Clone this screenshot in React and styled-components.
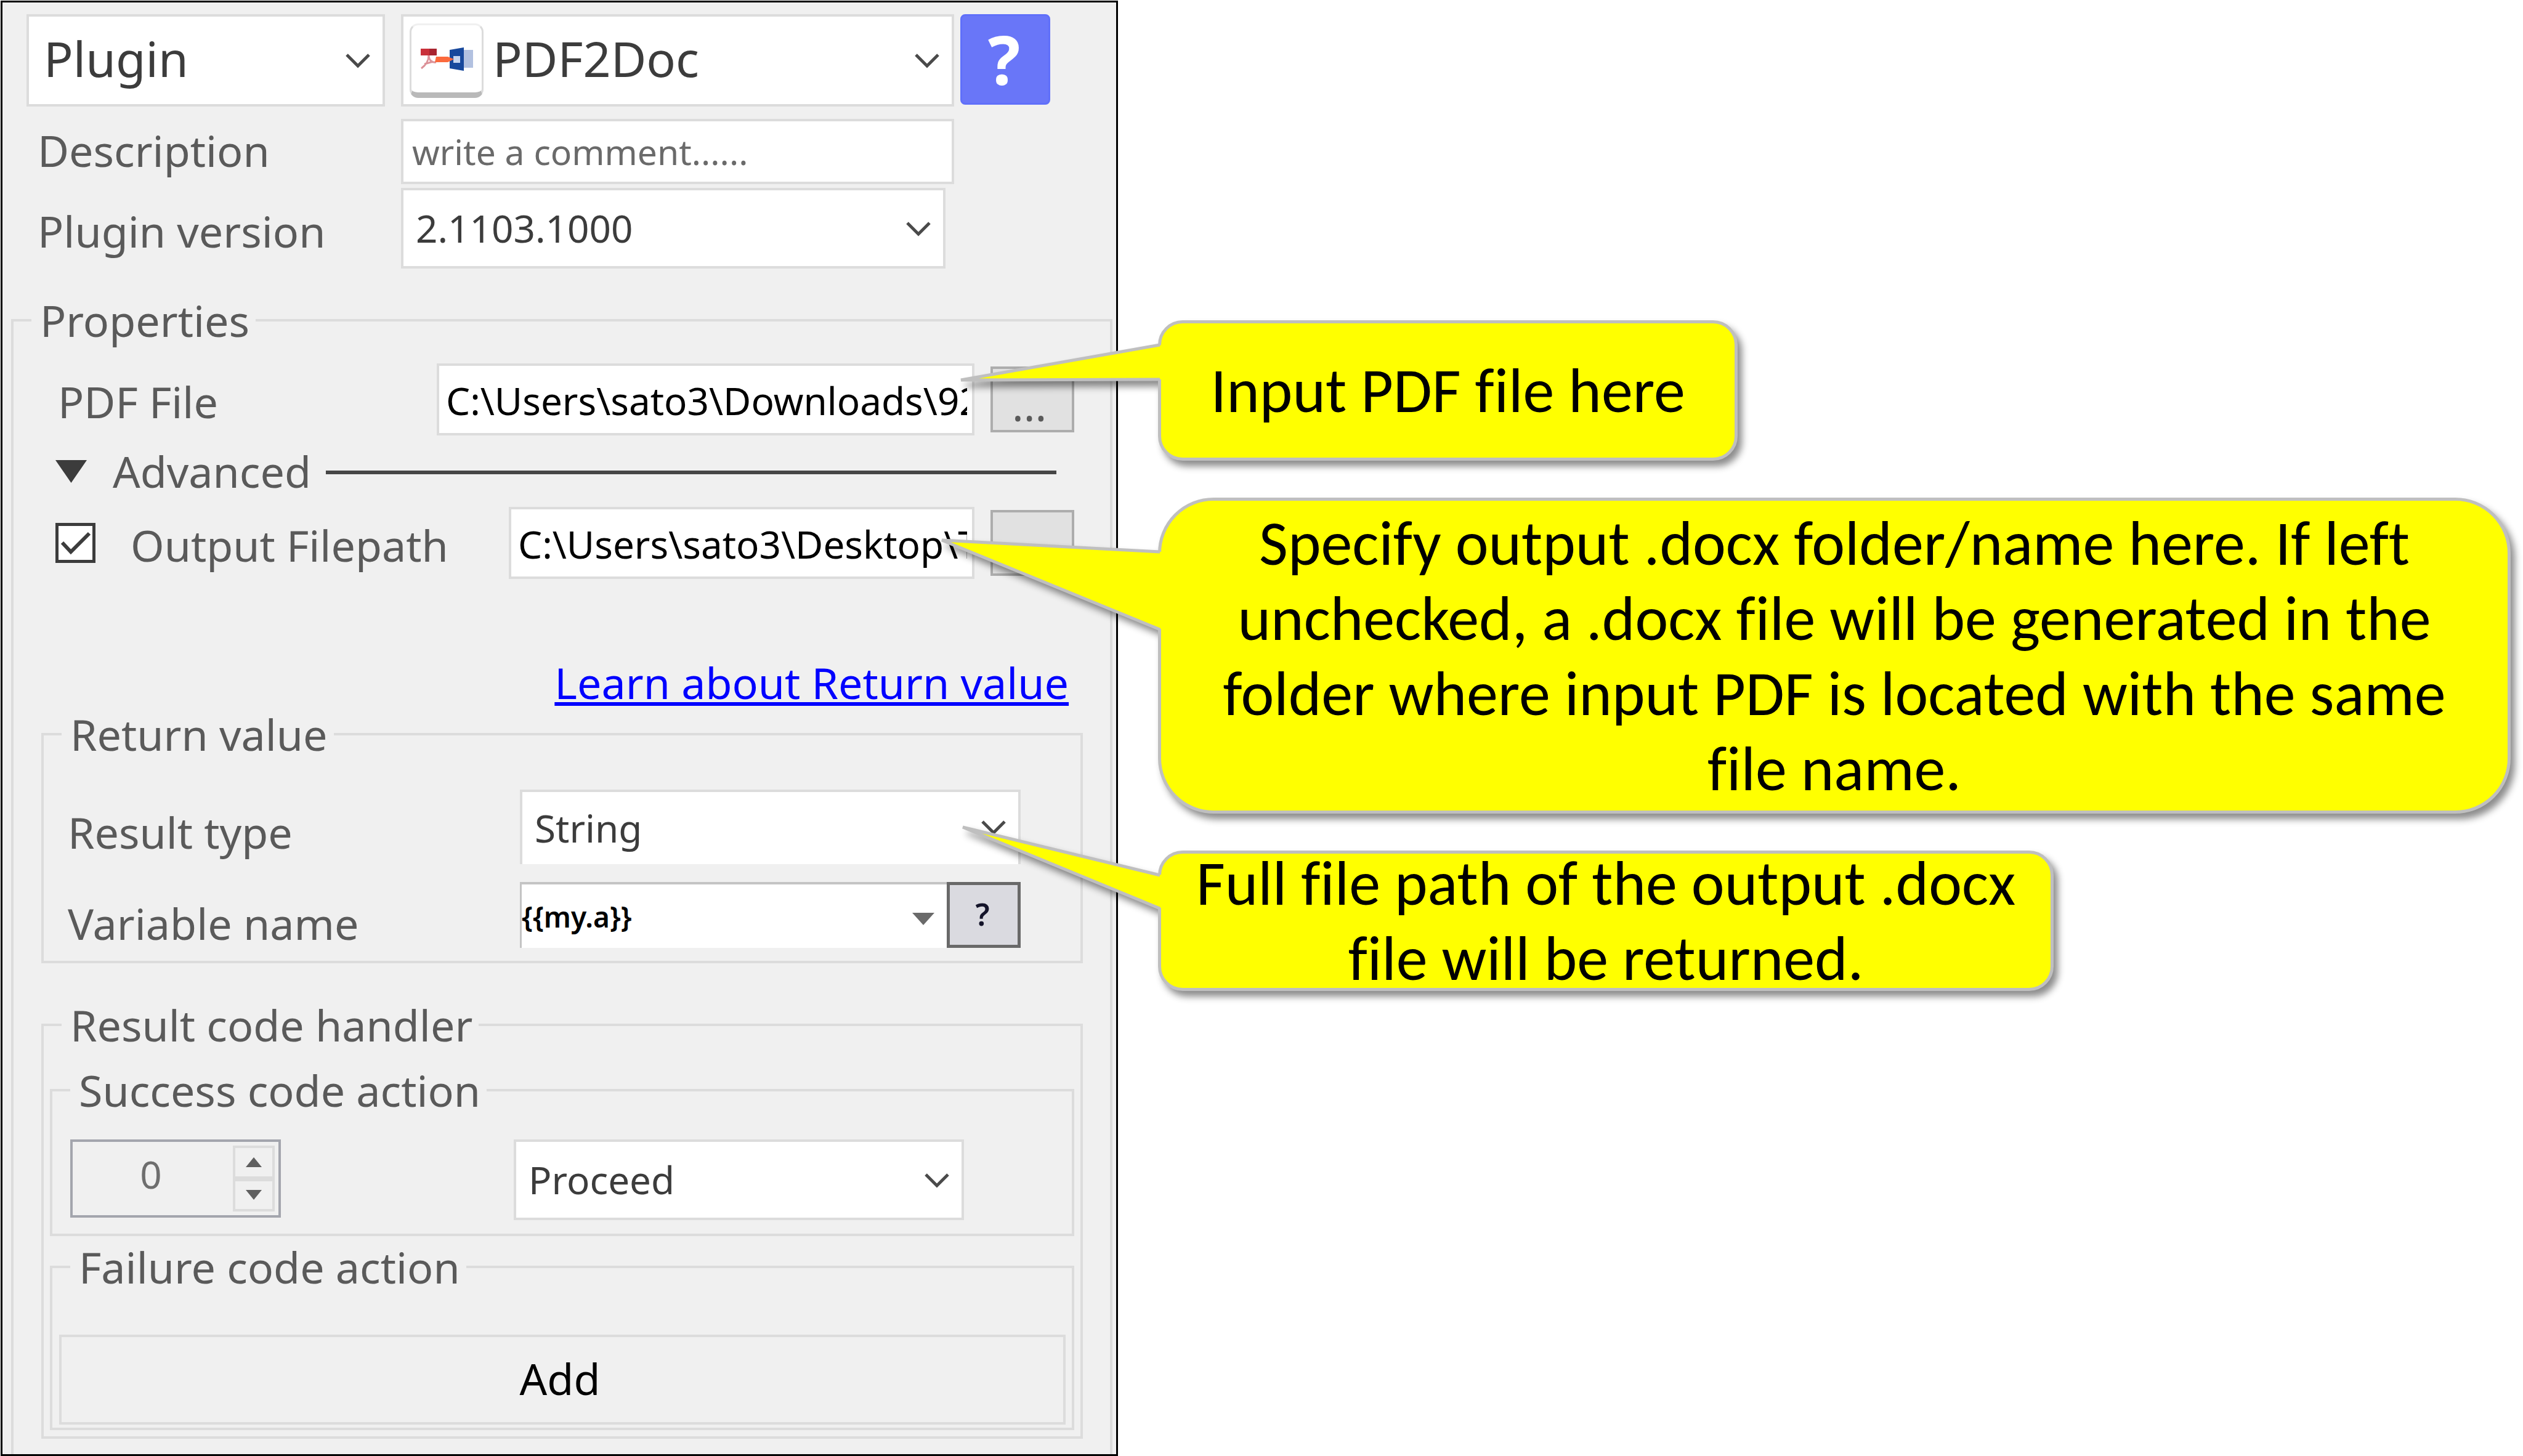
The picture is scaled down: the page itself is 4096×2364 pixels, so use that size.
import React from 'react';
import styled, { createGlobalStyle, css } from 'styled-components';

const ui = '"Noto Sans", "Open Sans", sans-serif';
const line = '#dcdcdc';

const GlobalStyle = createGlobalStyle`
  *, *::before, *::after { box-sizing: border-box; }
  body { margin: 0; background: #ffffff; font-family: ${ui}; }
  button, input, select { font-family: inherit; margin: 0; }
`;

const Page = styled.main`
  display: grid;
  grid-template-columns: 443fr 557fr;
  align-items: start;
  padding: 1px 0 1px 1px;
`;

const Panel = styled.form`
  border: 3px solid #000000;
  background: #f0f0f0;
  min-width: 0;
`;

const Header = styled.div`
  display: grid;
  grid-template-columns: 608px minmax(0, 1fr) 156px;
  padding: 19px 107px 0 39px;
`;

const Label = styled.label`
  padding: ${(p) => p.$drop || 0}px 0 ${(p) => p.$lift || 0}px ${(p) => p.$indent || 0}px;
  align-self: center;
  font-size: 70px;
  line-height: 80px;
  color: #5a5a5a;
  white-space: nowrap;
`;

const SelectBox = styled.div`
  position: relative;
  display: flex;
  height: ${(p) => p.$height || 131}px;
  margin: ${(p) => p.$margin || '0'};
`;

const Select = styled.select`
  appearance: none;
  flex: 1;
  min-width: 0;
  border: 4px solid ${line};
  border-bottom-width: ${(p) => (p.$open ? 0 : 4)}px;
  border-radius: 0;
  background: #ffffff;
  color: #3c3c3c;
  padding: 0 80px 2px 20px;
  font-size: 62px;
  ${(p) => p.$large && css`
    font-size: 79px;
    padding: 0 80px 8px ${p.$icon ? 145 : 24}px;
  `}
`;

const ChevronMark = styled.svg`
  position: absolute;
  right: 23px;
  top: 50%;
  width: 42px;
  height: 28px;
  margin-top: -13px;
  pointer-events: none;
`;

const Chevron = () => (
  <ChevronMark viewBox="0 0 42 28" aria-hidden="true">
    <path d="M3 4 L21 22 L39 4" fill="none" stroke="#4a4a4a" strokeWidth="5" />
  </ChevronMark>
);

const PluginTile = styled.span`
  position: absolute;
  left: 14px;
  top: 15px;
  width: 120px;
  height: 121px;
  border-radius: 14px;
  background: #ffffff;
  border: 3px solid #dcdcdc;
  border-top-color: #f0f0f0;
  border-bottom: 9px solid #b9b9b9;
  display: flex;
  align-items: center;
  justify-content: center;
  pointer-events: none;
`;

const PluginIcon = () => (
  <svg width="88" height="44" viewBox="0 0 88 44" aria-hidden="true">
    <rect x="2" y="5" width="26" height="11" fill="#c9303a" />
    <rect x="16" y="5" width="12" height="11" fill="#a82430" />
    <path d="M15 16 C15 24 10 32 3 37 M15 17 C16 24 20 28 27 27 M8 30 L22 26" fill="none" stroke="#dc9299" strokeWidth="3" />
    <rect x="72" y="7" width="15" height="29" fill="#b2c1e0" />
    <path d="M49 7 L72 3 V41 L49 37 Z" fill="#17489c" />
    <rect x="55" y="17" width="11" height="11" fill="#c5d5f0" />
    <path d="M27 18 H46 L56 22 L46 27 H25 Z" fill="#fb6a3d" />
  </svg>
);

const HelpButton = styled.button`
  justify-self: end;
  width: 146px;
  height: 147px;
  border: 3px solid #6070fa;
  border-radius: 8px;
  background: #6976f8;
  color: #ffffff;
  padding: 0 4px 4px 0;
  font-size: 110px;
  font-weight: 700;
  line-height: 130px;
`;

const TextInput = styled.input`
  min-width: 0;
  width: 100%;
  height: 117px;
  border: 4px solid ${line};
  border-radius: 0;
  background: #ffffff;
  color: #000000;
  font-size: 62px;
  padding: 2px 8px 0 11px;
`;

const CommentInput = styled(TextInput)`
  height: 106px;
  font-size: 57px;
  padding: 0 14px;
  &::placeholder { color: #6a6a6a; opacity: 1; }
`;

const Group = styled.fieldset`
  min-width: 0;
  margin: ${(p) => p.$margin || '0'};
  padding: ${(p) => p.$padding || '0'};
  border: 4px solid ${line};
  border-bottom-width: ${(p) => (p.$open ? 0 : 4)}px;
`;

const Legend = styled.legend`
  margin-left: ${(p) => p.$shift}px;
  padding: 0 10px 0 14px;
  font-size: 70px;
  line-height: 80px;
  color: #5a5a5a;
`;

const Fields = styled.div`
  padding: 30px 58px 0 68px;
`;

const FieldRow = styled.div`
  display: grid;
  grid-template-columns: ${(p) => p.$columns};
  align-items: center;
  margin-top: ${(p) => p.$gap || 0}px;
`;

const BrowseButton = styled.button`
  justify-self: end;
  width: 136px;
  height: 107px;
  border: 4px solid #adadad;
  border-radius: 0;
  background: #e1e1e1;
  color: #5a5a5a;
  font-size: 70px;
  line-height: 80px;
  padding: 16px 10px 0 0;
`;

const AdvancedRow = styled.button`
  display: flex;
  align-items: center;
  width: 100%;
  height: 116px;
  border: 0;
  padding: 0 29px 0 0;
  background: none;
  color: #5a5a5a;
  font-size: 70px;
  line-height: 80px;
  text-align: left;

  svg { width: 51px; height: 37px; margin-right: 42px; }
  &::after { content: ''; flex: 1; height: 6px; margin: 4px 0 0 24px; background: #464646; }
`;

const CheckBox = styled.input`
  appearance: none;
  display: block;
  width: 65px;
  height: 65px;
  margin: 0;
  border: 5px solid #3c3c3c;
  background: #ffffff;
`;

const CheckCell = styled.span`
  position: relative;
  display: block;
  width: 65px;
  svg { position: absolute; inset: 0; pointer-events: none; }
`;

const LinkLine = styled.div`
  display: flex;
  justify-content: flex-end;
  padding: 128px 67px 0 0;
`;

const Link = styled.a`
  color: #0000ff;
  font-size: 70px;
  line-height: 80px;
  text-decoration: underline;
  text-decoration-thickness: 6px;
  text-underline-offset: 5px;
  text-decoration-skip-ink: none;
`;

const Groups = styled.div`
  padding: 4px 44px 25px 45px;
`;

const Combo = styled.div`
  position: relative;
  display: flex;
  height: 107px;

  svg { position: absolute; right: 140px; top: 50px; width: 36px; height: 20px; }
`;

const ComboInput = styled.input`
  flex: 1;
  min-width: 0;
  border: 0;
  border-top: 4px solid #c4c4c4;
  border-left: 3px solid #c4c4c4;
  border-radius: 0;
  padding: 0 60px 0 0;
  font-size: 46px;
  font-weight: 600;
  color: #000000;
  background: #ffffff;
`;

const SmallHelp = styled.button`
  width: 120px;
  border: 5px solid #696969;
  border-radius: 0;
  background: #dadae0;
  color: #14142a;
  font-size: 50px;
  font-weight: 600;
  padding: 0 4px 4px 0;
`;

const ActionRow = styled.div`
  display: grid;
  grid-template-columns: 720px minmax(0, 1fr);
  align-items: start;
`;

const Spinner = styled.div`
  display: flex;
  width: 342px;
  height: 127px;
  border: 4px solid #a3a5ad;
  padding: 6px;
`;

const SpinnerValue = styled.input`
  flex: 1;
  min-width: 0;
  border: 0;
  padding: 0 12px 16px 0;
  background: none;
  color: #6e6e6e;
  font-size: 62px;
  text-align: center;
`;

const SpinnerButtons = styled.div`
  display: grid;
  grid-template-rows: 1fr 1fr;
  width: 68px;
`;

const StepButton = styled.button`
  display: flex;
  align-items: center;
  justify-content: center;
  border: 4px solid ${line};
  border-radius: 0;
  padding: 0;
  background: #f0f0f0;
  svg { width: 26px; height: 16px; }
`;

const AddButton = styled.button`
  display: block;
  width: 100%;
  height: 146px;
  border: 4px solid ${line};
  border-radius: 0;
  background: #f0f0f0;
  color: #000000;
  font-size: 70px;
  padding: 0 8px 4px 0;
`;

const Notes = styled.aside`
  display: flex;
  flex-direction: column;
  align-items: flex-start;
  gap: 60px;
  padding: 519px 20px 0 65px;
`;

const Callout = styled.section`
  position: relative;
  display: flex;
  align-items: center;
  justify-content: center;
  width: ${(p) => p.$width};
  height: ${(p) => p.$height}px;
  border: 5px solid #bfbfbf;
  border-radius: ${(p) => p.$radius}px;
  background: #ffff00;
  filter: drop-shadow(7px 9px 6px rgba(0, 0, 0, 0.45));
`;

const CalloutText = styled.p`
  margin: 0;
  font-family: Carlito, Lato, sans-serif;
  font-size: 102px;
  line-height: 122px;
  font-variant-ligatures: none;
  text-align: center;
  color: #000000;
  white-space: pre;
`;

const Tail = styled.svg`
  position: absolute;
  overflow: visible;
  right: 100%;
  top: ${(p) => p.$top}px;
  width: ${(p) => p.$w}px;
  height: ${(p) => p.$h}px;
`;

function Pointer({ top, tip, base }) {
  const [tx, ty] = tip;
  return (
    <Tail $top={top} $w={tx} $h={base} viewBox={`0 0 ${tx} ${base}`} aria-hidden="true">
      <path d={`M${tx + 2} 0 L0 ${ty} L${tx + 2} ${base} Z`} fill="#ffff00" />
      <path
        d={`M${tx - 2} 0 L0 ${ty} L${tx - 2} ${base}`}
        fill="none"
        stroke="#bfbfbf"
        strokeWidth="5"
        strokeLinejoin="bevel"
      />
      <path d={`M${tx - 5} 4 H${tx + 2} V${base - 4} H${tx - 5} Z`} fill="#ffff00" />
    </Tail>
  );
}

const Triangle = ({ up, color }) => (
  <svg viewBox="0 0 10 10" preserveAspectRatio="none" aria-hidden="true">
    <path d={up ? 'M0 10 L5 0 L10 10 Z' : 'M0 0 L10 0 L5 10 Z'} fill={color} />
  </svg>
);

export default function App() {
  return (
    <>
      <GlobalStyle />
      <Page>
        <Panel onSubmit={(e) => e.preventDefault()}>
          <Header>
            <SelectBox $height={150} $margin="0 26px 20px 0">
              <Select $large aria-label="Action type" defaultValue="Plugin">
                <option>Plugin</option>
              </Select>
              <Chevron />
            </SelectBox>
            <SelectBox $height={150}>
              <Select $large $icon aria-label="Plugin name" defaultValue="PDF2Doc">
                <option>PDF2Doc</option>
              </Select>
              <PluginTile><PluginIcon /></PluginTile>
              <Chevron />
            </SelectBox>
            <HelpButton type="button">?</HelpButton>

            <Label htmlFor="description" $lift={4} $indent={18}>Description</Label>
            <CommentInput id="description" placeholder="write a comment......" />
            <span />

            <Label htmlFor="version" $drop={14} $indent={18}>Plugin version</Label>
            <SelectBox $margin="6px 14px 0 0">
              <Select id="version" defaultValue="2.1103.1000">
                <option>2.1103.1000</option>
              </Select>
              <Chevron />
            </SelectBox>
          </Header>

          <Group $open $margin="44px 6px 0 14px">
            <Legend $shift={29}>Properties</Legend>
            <Fields>
              <FieldRow $columns="619px minmax(0, 1fr) 162px">
                <Label htmlFor="pdf" $indent={4} $drop={6}>PDF File</Label>
                <TextInput id="pdf" defaultValue="C:\Users\sato3\Downloads\92" />
                <BrowseButton type="button">...</BrowseButton>
              </FieldRow>
              <AdvancedRow type="button">
                <Triangle color="#3c3c3c" />
                Advanced
              </AdvancedRow>
              <FieldRow $columns="122px 614px minmax(0, 1fr) 162px">
                <CheckCell>
                  <CheckBox id="output-on" type="checkbox" defaultChecked aria-label="Use output filepath" />
                  <svg viewBox="0 0 65 65" aria-hidden="true">
                    <path d="M11 32 L25 47 L55 17" fill="none" stroke="#3c3c3c" strokeWidth="6" />
                  </svg>
                </CheckCell>
                <Label htmlFor="output" $drop={6}>Output Filepath</Label>
                <TextInput id="output" defaultValue="C:\Users\sato3\Desktop\T" />
                <BrowseButton type="button">...</BrowseButton>
              </FieldRow>
            </Fields>

            <LinkLine>
              <Link href="#return-value">Learn about Return value</Link>
            </LinkLine>

            <Groups>
              <Group id="return-value" $padding="50px 97px 21px 35px">
                <Legend $shift={-6}>Return value</Legend>
                <FieldRow $columns="738px minmax(0, 1fr)">
                  <Label htmlFor="result-type" $drop={16} $indent={4}>Result type</Label>
                  <SelectBox $height={121}>
                    <Select id="result-type" $open defaultValue="String">
                      <option>String</option>
                    </Select>
                    <Chevron />
                  </SelectBox>
                </FieldRow>
                <FieldRow $columns="738px minmax(0, 1fr)" $gap={29}>
                  <Label htmlFor="variable" $drop={27} $indent={4}>Variable name</Label>
                  <Combo>
                    <ComboInput id="variable" defaultValue="{{my.a}}" />
                    <Triangle color="#6a6a6a" />
                    <SmallHelp type="button">?</SmallHelp>
                  </Combo>
                </FieldRow>
              </Group>

              <Group $margin="60px 0 0" $padding="26px 10px 10px">
                <Legend $shift={19}>Result code handler</Legend>
                <Group $padding="40px 175px 22px 29px">
                  <Legend $shift={0}>Success code action</Legend>
                  <ActionRow>
                    <Spinner>
                      <SpinnerValue aria-label="Success code" defaultValue="0" disabled />
                      <SpinnerButtons>
                        <StepButton type="button" aria-label="Increase"><Triangle up color="#5f5f5f" /></StepButton>
                        <StepButton type="button" aria-label="Decrease"><Triangle color="#5f5f5f" /></StepButton>
                      </SpinnerButtons>
                    </Spinner>
                    <SelectBox>
                      <Select aria-label="Success action" defaultValue="Proceed">
                        <option>Proceed</option>
                      </Select>
                      <Chevron />
                    </SelectBox>
                  </ActionRow>
                </Group>
                <Group $margin="10px 0 0" $padding="70px 10px 5px 11px">
                  <Legend $shift={18}>Failure code action</Legend>
                  <AddButton type="button">Add</AddButton>
                </Group>
              </Group>
            </Groups>
          </Group>
        </Panel>

        <Notes>
          <Callout $width="941px" $height={228} $radius={40}>
            <Pointer top={35} tip={[325, 57]} base={56} />
            <CalloutText>Input PDF file here</CalloutText>
          </Callout>
          <Callout $width="100%" $height={513} $radius={90}>
            <Pointer top={83} tip={[356, -19]} base={126} />
            <CalloutText>
              {'Specify output .docx folder/name here. If left\nunchecked, a .docx file will be generated in the\nfolder where input PDF is located with the same\nfile name.'}
            </CalloutText>
          </Callout>
          <Callout $width="1454px" $height={228} $radius={40}>
            <Pointer top={35} tip={[322, -78]} base={54} />
            <CalloutText>
              {'Full file path of the output .docx\nfile will be returned.'}
            </CalloutText>
          </Callout>
        </Notes>
      </Page>
    </>
  );
}
